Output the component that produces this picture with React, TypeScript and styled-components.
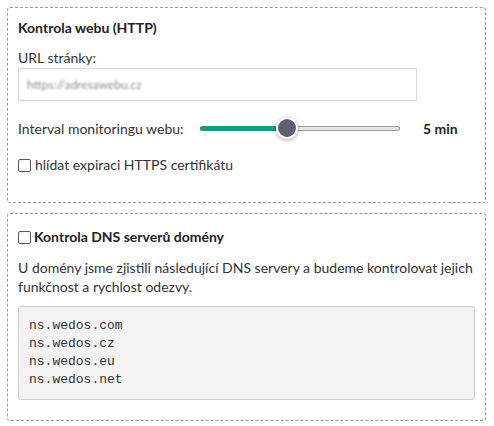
import styled, { createGlobalStyle } from "styled-components";

const Global = createGlobalStyle`
  body {
    margin: 0;
    background: #fff;
    font-family: Lato, "Noto Sans", sans-serif;
    font-size: 14px;
    color: #333;
  }
`;

const Page = styled.div`
  padding: 7px 8px 6px 7px;
  display: flex;
  flex-direction: column;
  gap: 10px;
`;

const Box = styled.section<{ $top: number; $bottom: number }>`
  border: 1px dashed #999;
  border-radius: 3px;
  padding: ${(p) => p.$top}px 10px ${(p) => p.$bottom}px 10px;
`;

const Title = styled.h3`
  margin: 0 0 12px;
  font-size: 14px;
  font-weight: 700;
  line-height: 18px;
  color: #222;
  display: flex;
  align-items: center;
  gap: 3px;
`;

const Label = styled.div`
  line-height: 18px;
  margin-bottom: 1px;
`;

const UrlInput = styled.div`
  width: 399px;
  height: 33px;
  box-sizing: border-box;
  border: 1px solid #d4d8de;
  padding: 0 8px;
  display: flex;
  align-items: center;
  margin-bottom: 17px;
`;

const Blurred = styled.span`
  color: #868c95;
  filter: blur(1.2px);
  font-size: 12px;
`;

const SliderRow = styled.div`
  display: flex;
  align-items: center;
  height: 20px;
  margin-bottom: 18px;
`;

const SliderLabel = styled.span`
  width: 182px;
`;

const Track = styled.div`
  position: relative;
  width: 200px;
  height: 5px;
  border-radius: 3px;
  background: #e6e6ea;
  box-shadow: inset 0 0 0 1px #9a9aa4;
`;

const Fill = styled.div`
  height: 100%;
  border-radius: 3px;
  background: #1a9a7e;
`;

const Thumb = styled.div`
  position: absolute;
  top: 50%;
  width: 18px;
  height: 18px;
  margin: -11px 0 0 -11px;
  border-radius: 50%;
  background: #5e5f6f;
  border: 2px solid #fff;
  box-shadow: 0 1px 4px rgba(0, 0, 0, 0.35);
`;

const Value = styled.b`
  margin-left: 23px;
  color: #222;
`;

const CheckRow = styled.label`
  display: flex;
  align-items: center;
  gap: 4px;
  line-height: 18px;
`;

const Check = styled.span`
  width: 11px;
  height: 11px;
  border: 1px solid #555;
  border-radius: 2px;
  background: #fff;
  flex: none;
`;

const Para = styled.p`
  margin: 0 0 10px;
  line-height: 19px;
`;

const Pre = styled.pre`
  margin: 0;
  padding: 10px 10px;
  background: #f3f3f3;
  border: 1px solid #d0d0d0;
  border-radius: 3px;
  font-family: "Liberation Mono", monospace;
  font-size: 13px;
  line-height: 18px;
  color: #333;
`;

const servers = ["ns.wedos.com", "ns.wedos.cz", "ns.wedos.eu", "ns.wedos.net"];

export default function App() {
  const pct = 43.5;
  return (
    <Page>
      <Global />
      <Box $top={11} $bottom={28}>
        <Title>Kontrola webu (HTTP)</Title>
        <Label>URL stránky:</Label>
        <UrlInput>
          <Blurred>https://adresawebu.cz</Blurred>
        </UrlInput>
        <SliderRow>
          <SliderLabel>Interval monitoringu webu:</SliderLabel>
          <Track>
            <Fill style={{ width: `${pct}%` }} />
            <Thumb style={{ left: `${pct}%` }} />
          </Track>
          <Value>5 min</Value>
        </SliderRow>
        <CheckRow>
          <Check />
          hlídat expiraci HTTPS certifikátu
        </CheckRow>
      </Box>
      <Box $top={14} $bottom={20}>
        <Title>
          <Check />
          Kontrola DNS serverů domény
        </Title>
        <Para>
          U domény jsme zjistili následující DNS servery a budeme kontrolovat jejich funkčnost a rychlost odezvy.
        </Para>
        <Pre>{servers.join("\n")}</Pre>
      </Box>
    </Page>
  );
}
